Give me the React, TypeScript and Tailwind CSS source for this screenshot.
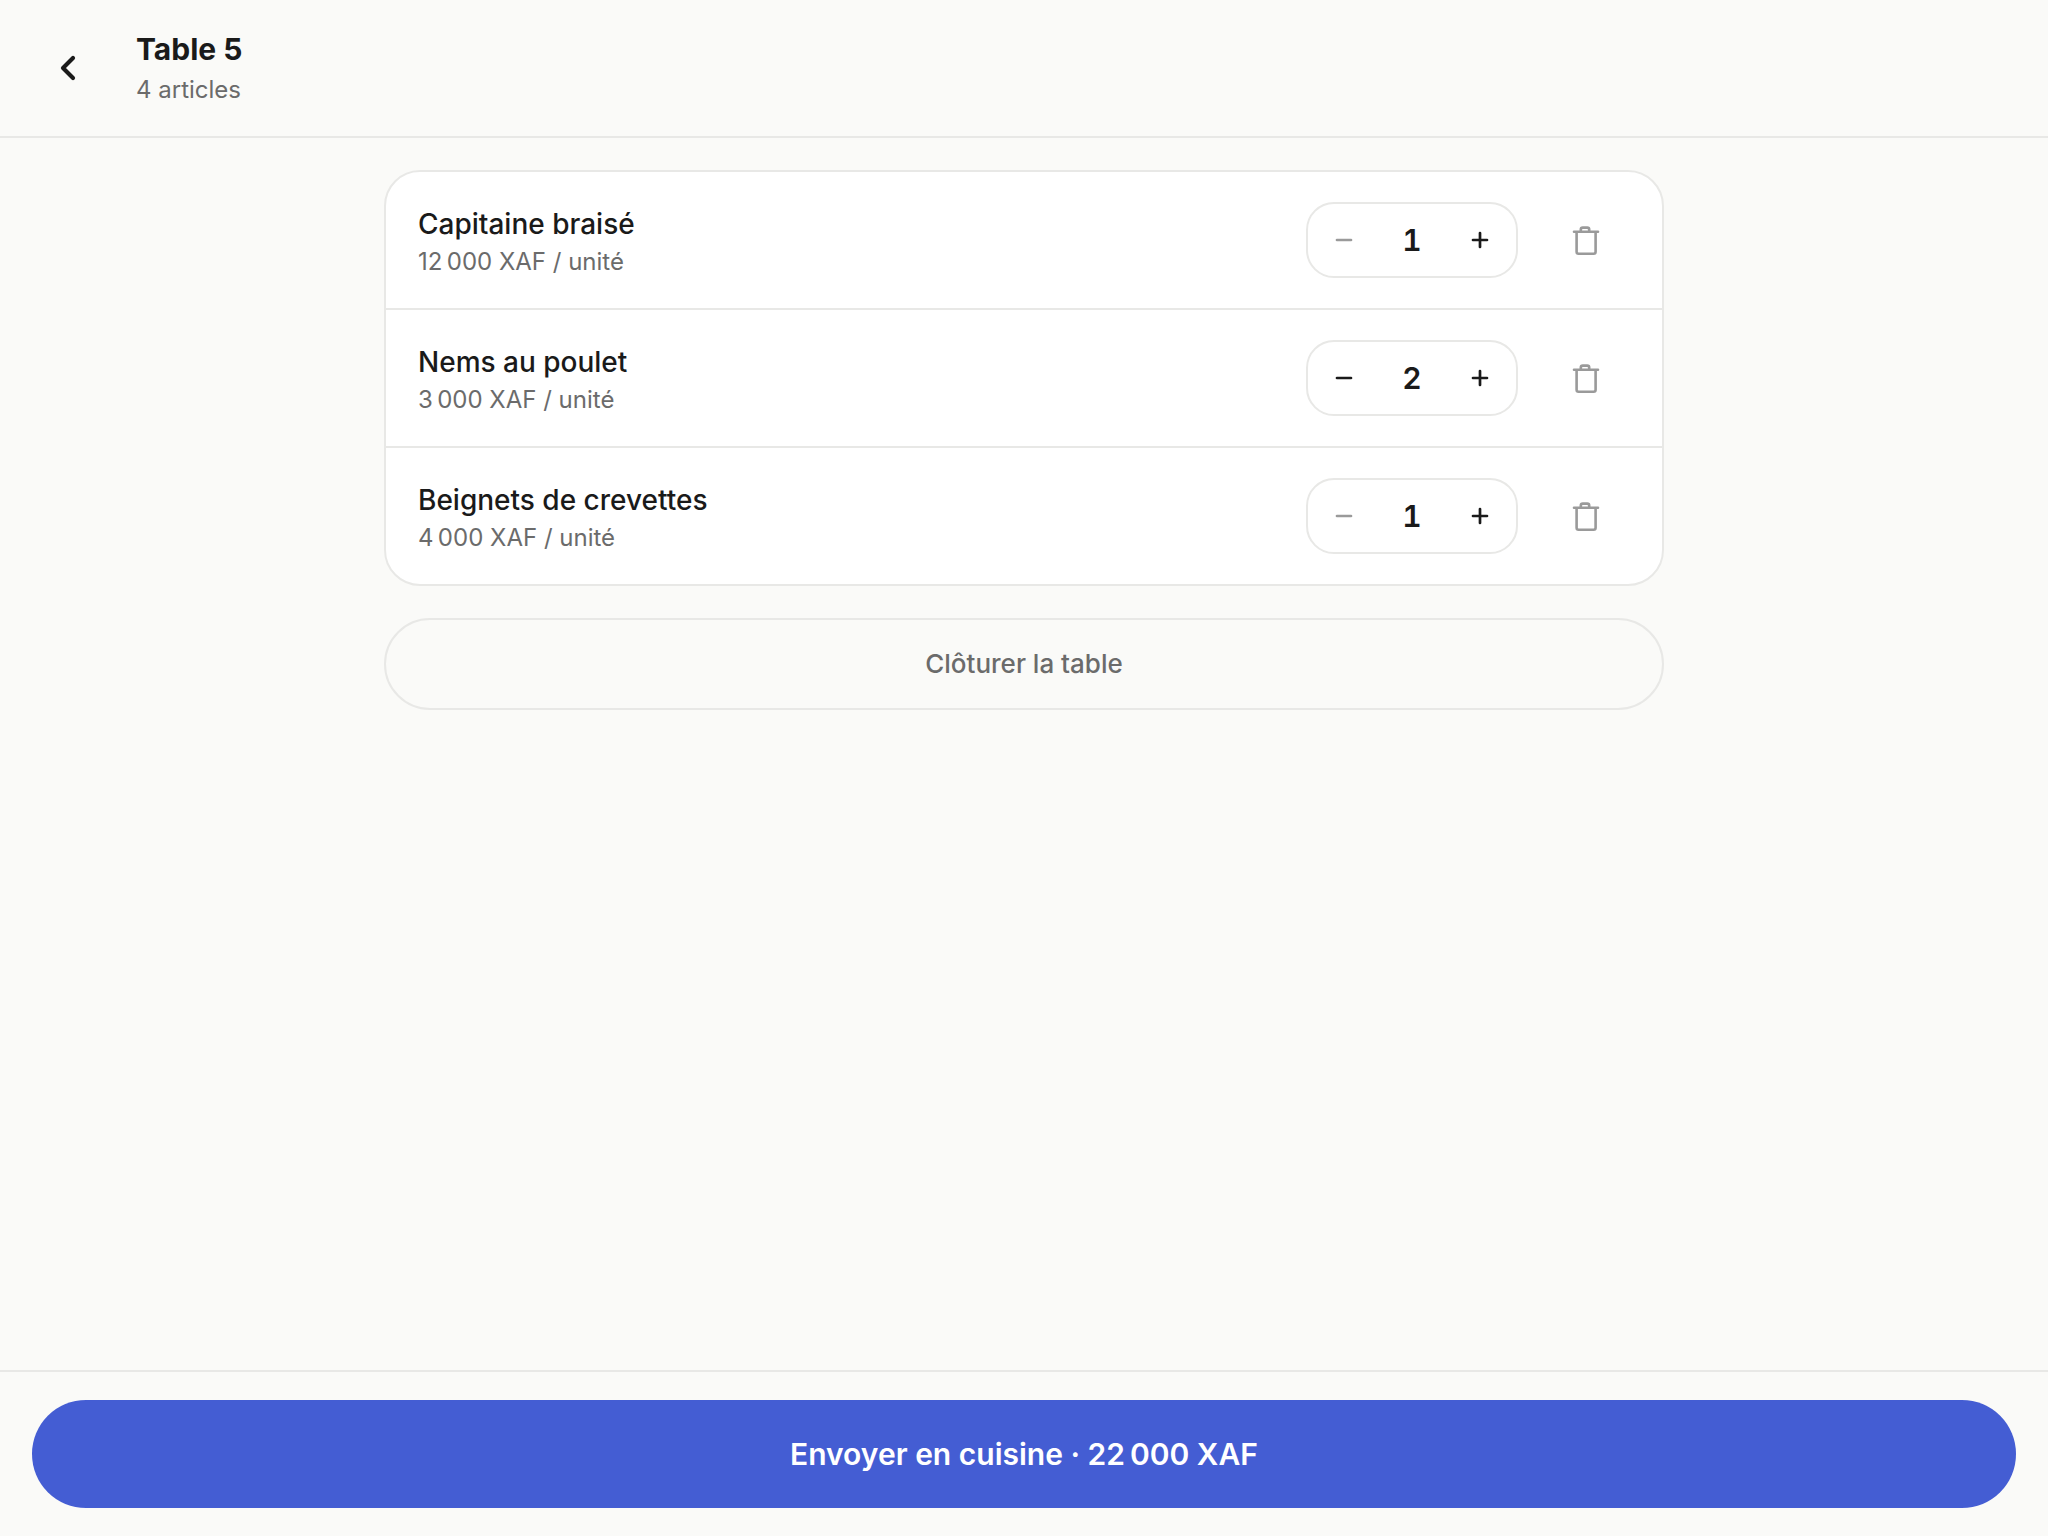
import { useState } from "react";

type Item = { id: number; name: string; price: number; quantity: number };

const initialItems: Item[] = [
  { id: 1, name: "Capitaine braisé", price: 12000, quantity: 1 },
  { id: 2, name: "Nems au poulet", price: 3000, quantity: 2 },
  { id: 3, name: "Beignets de crevettes", price: 4000, quantity: 1 },
];

const formatPrice = (value: number) =>
  String(value).replace(/\B(?=(\d{3})+$)/g, "\u202f") + " XAF";

function BackIcon() {
  return (
    <svg width="44" height="44" viewBox="0 0 44 44" fill="none" stroke="currentColor" strokeWidth="4.2" strokeLinecap="round" strokeLinejoin="round" aria-hidden="true">
      <path d="M27 12 17 22l10 10" />
    </svg>
  );
}

function MinusIcon() {
  return (
    <svg width="28" height="28" viewBox="0 0 28 28" fill="none" stroke="currentColor" strokeWidth="2.7" strokeLinecap="round" aria-hidden="true">
      <path d="M7 14h14" />
    </svg>
  );
}

function PlusIcon() {
  return (
    <svg width="28" height="28" viewBox="0 0 28 28" fill="none" stroke="currentColor" strokeWidth="2.7" strokeLinecap="round" aria-hidden="true">
      <path d="M7 14h14M14 7v14" />
    </svg>
  );
}

function TrashIcon() {
  return (
    <svg width="36" height="36" viewBox="0 0 36 36" fill="none" stroke="currentColor" strokeWidth="2.6" strokeLinecap="round" strokeLinejoin="round" aria-hidden="true">
      <path d="M6 9.8h24M8.6 9.8v20a2 2 0 0 0 2 2h15a2 2 0 0 0 2-2v-20M12.8 9.8v-2.200a2 2 0 0 1 2-2h4.400a2 2 0 0 1 2 2v2.200" />
    </svg>
  );
}

function ItemRow({ item, onChange, onRemove }: { item: Item; onChange: (quantity: number) => void; onRemove: () => void }) {
  return (
    <li className="flex items-center gap-6 px-8 py-6">
      <div className="flex min-w-0 flex-1 flex-col gap-0.5">
        <span className="text-[28px] leading-[42px] font-medium">{item.name}</span>
        <span className="text-[24px] leading-[30px] text-[#6b6b6b]">{formatPrice(item.price)} / unité</span>
      </div>
      <div className="flex items-center rounded-[28px] border-2 border-[#e8e8e6]">
        <button
          type="button"
          aria-label={`Retirer un ${item.name}`}
          disabled={item.quantity === 1}
          onClick={() => onChange(item.quantity - 1)}
          className="grid size-18 place-items-center disabled:text-[#9a9a9a]"
        >
          <MinusIcon />
        </button>
        <span className="w-16 text-center text-[30px] leading-9 font-semibold tabular-nums">{item.quantity}</span>
        <button
          type="button"
          aria-label={`Ajouter un ${item.name}`}
          onClick={() => onChange(item.quantity + 1)}
          className="grid size-18 place-items-center"
        >
          <PlusIcon />
        </button>
      </div>
      <button type="button" aria-label={`Supprimer ${item.name}`} onClick={onRemove} className="grid size-22 place-items-center text-[#9a9a9a]">
        <TrashIcon />
      </button>
    </li>
  );
}

export default function App() {
  const [items, setItems] = useState(initialItems);
  const count = items.reduce((sum, item) => sum + item.quantity, 0);
  const total = items.reduce((sum, item) => sum + item.quantity * item.price, 0);

  return (
    <div className="flex min-h-screen flex-col bg-[#fafaf8] font-['Inter',sans-serif] text-[#1a1a1a] antialiased">
      <header className="flex items-center gap-6 border-b-2 border-[#e8e8e6] p-6">
        <button type="button" aria-label="Retour" className="grid size-22 place-items-center">
          <BackIcon />
        </button>
        <div className="flex flex-col gap-0.5">
          <h1 className="text-[30px] leading-[42px] font-bold">Table 5</h1>
          <p className="text-[24px] leading-9 text-[#6b6b6b]">{count} articles</p>
        </div>
      </header>

      <main className="mx-auto flex w-full max-w-[1344px] flex-1 flex-col gap-8 p-8">
        <ul className="divide-y-2 divide-[#e8e8e6] rounded-[36px] border-2 border-[#e8e8e6] bg-white">
          {items.map((item) => (
            <ItemRow
              key={item.id}
              item={item}
              onChange={(quantity) => setItems(items.map((other) => (other.id === item.id ? { ...other, quantity } : other)))}
              onRemove={() => setItems(items.filter((other) => other.id !== item.id))}
            />
          ))}
        </ul>
        <button type="button" className="h-23 rounded-full border-2 border-[#e8e8e6] text-[26px] leading-[30px] font-medium text-[#6b6b6b]">
          Clôturer la table
        </button>
      </main>

      <footer className="border-t-2 border-[#e8e8e6] px-8 py-7">
        <button type="button" className="h-27 w-full rounded-full bg-[#445dd3] text-[30px] leading-9 font-semibold text-white">
          Envoyer en cuisine · {formatPrice(total)}
        </button>
      </footer>
    </div>
  );
}
